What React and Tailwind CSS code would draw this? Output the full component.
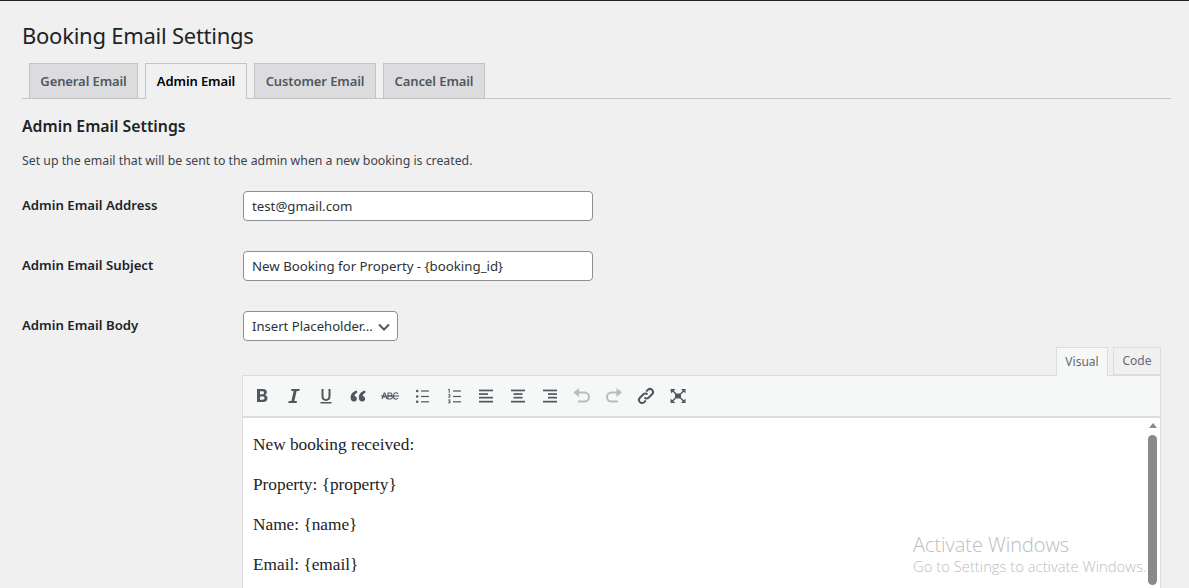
import React from 'react';

const ui = { fontFamily: '"Noto Sans", "Open Sans", sans-serif' };

const tabs = [
  { label: 'General Email', width: 'w-[109px]' },
  { label: 'Admin Email', width: 'w-[102px]', active: true },
  { label: 'Customer Email', width: 'w-[122px]' },
  { label: 'Cancel Email', width: 'w-[102px]' },
];

const Icon = ({ children, muted }) => (
  <svg
    viewBox="0 0 20 20"
    className={`w-5 h-5 ${muted ? 'text-[#b9bcbf]' : 'text-[#50575e]'}`}
    fill="currentColor"
  >
    {children}
  </svg>
);

// toolbar glyphs, drawn on a 20x20 grid
const lines = (rows) => rows.map(([x, y, w, h = 1.2], i) => <rect key={i} x={x} y={y} width={w} height={h} />);

const toolbar = [
  <Icon key="b">
    <path fillRule="evenodd" d="M5 3h6c2.4 0 3.8 1.2 3.8 3.2 0 1.4-.8 2.4-2 2.8 1.6.3 2.7 1.5 2.7 3.3 0 2.3-1.7 3.7-4.3 3.7H5V3zm3 2.3v2.9h2.3c1 0 1.6-.5 1.6-1.5s-.6-1.4-1.600-1.400H8zm0 5.100v3.300h2.600c1.200 0 1.900-.6 1.900-1.700s-.7-1.600-1.900-1.600H8z" />
  </Icon>,
  <Icon key="i">
    <path d="M7.500 3h8.200l-.4 2h-2.700l-2.200 9.900h2.600l-.4 2.100H4.300l.4-2.100h2.700L9.600 5H7.100l.4-2z" />
  </Icon>,
  <Icon key="u">
    <path d="M5.500 3h2v7.200c0 1.800.9 2.900 2.500 2.900s2.500-1.100 2.500-2.900V3h2v7.300c0 2.900-1.700 4.600-4.500 4.600s-4.500-1.700-4.500-4.600V3zM4.500 16h11v1.600h-11z" />
  </Icon>,
  <Icon key="q">
    <path d="M8.800 4.500C5 5.600 2.600 8 2.600 11.600c0 2.400 1.400 4 3.300 4 1.700 0 3-1.200 3-2.900 0-1.600-1.100-2.700-2.500-2.800.3-1.500 1.500-2.700 3.100-3.400L8.800 4.500zM17 4.500c-3.800 1.100-6.200 3.500-6.200 7.100 0 2.400 1.400 4 3.300 4 1.700 0 3-1.200 3-2.900 0-1.600-1.100-2.700-2.500-2.800.3-1.500 1.500-2.700 3.100-3.400L17 4.500z" />
  </Icon>,
  <svg key="s" viewBox="0 0 20 20" className="w-5 h-5 text-[#50575e]" fill="none" stroke="currentColor" strokeWidth="1.100">
    <path d="M2 13l2.200-6h.6l2.200 6M2.800 11h3.400M8 7h2.500c1.800 0 1.800 2.800 0 2.800H8zm0 2.800h2.800c2 0 2 3.200 0 3.200H8zM18 8c-.7-1-1.300-1.200-2-1.200-1.700 0-2.600 1.400-2.600 3.200s.9 3.200 2.600 3.200c.7 0 1.300-.2 2-1.200" />
    <path d="M1 10h18" />
  </svg>,
  <Icon key="ul">
    {lines([[9, 4.400, 8], [9, 9.900, 8], [9, 15.200, 8]])}
    <circle cx="5.200" cy="5" r="1.300" />
    <circle cx="5.200" cy="10.500" r="1.300" />
    <circle cx="5.200" cy="15.800" r="1.300" />
  </Icon>,
  <svg key="ol" viewBox="0 0 20 20" className="w-5 h-5 text-[#50575e]" fill="currentColor">
    {lines([[9, 4.400, 8], [9, 9.900, 8], [9, 15.200, 8]])}
    <g transform="translate(1.500 0.300)">
      <path d="M3.200 2.600h1v4h-1V3.600l-.7.300v-.8zM2.500 8.300c.3-.4.800-.6 1.300-.6.800 0 1.300.4 1.300 1.100 0 .5-.3.900-1.300 1.700h1.400v.8H2.500v-.7c1.300-1 1.600-1.400 1.600-1.700 0-.3-.2-.4-.4-.4-.3 0-.5.200-.7.400zM2.500 13.200h2.600v.6l-1 .9c.7.100 1.100.5 1.100 1.100 0 .8-.6 1.300-1.500 1.300-.5 0-1-.2-1.300-.5l.4-.6c.2.200.5.300.8.300.3 0 .6-.1.600-.4 0-.3-.3-.4-.9-.4v-.6l.8-.8H2.500z" />
    </g>
  </svg>,
  <Icon key="al">{lines([[3, 3.600, 14, 1.700], [3, 7.200, 9, 1.700], [3, 10.800, 14, 1.700], [3, 14.800, 14, 1.700]])}</Icon>,
  <Icon key="ac">{lines([[3, 3.600, 14, 1.700], [5.500, 7.200, 9, 1.700], [5.500, 10.800, 9, 1.700], [3, 14.800, 14, 1.700]])}</Icon>,
  <Icon key="ar">{lines([[3, 3.600, 14, 1.700], [8, 7.200, 9, 1.700], [8, 10.800, 9, 1.700], [3, 14.800, 14, 1.700]])}</Icon>,
  <svg key="undo" viewBox="0 0 20 20" className="w-5 h-5 text-[#b9bcbf]" fill="none" stroke="currentColor" strokeWidth="2">
    <path d="M1.500 6.500L7 2v9z" fill="currentColor" stroke="none" />
    <path d="M5.500 6.500h7a4 4 0 0 1 0 9H6" />
  </svg>,
  <svg key="redo" viewBox="0 0 20 20" className="w-5 h-5 text-[#b9bcbf]" fill="none" stroke="currentColor" strokeWidth="2">
    <path d="M18 6.500L12.500 2v9z" fill="currentColor" stroke="none" />
    <path d="M14 6.500H7.500a4 4 0 0 0 0 9H14" />
  </svg>,
  <svg key="link" viewBox="0 0 20 20" className="w-5 h-5 text-[#50575e]" fill="none" stroke="currentColor" strokeWidth="2">
    <path d="M8.500 11.500a3 3 0 0 0 4.300 0l3.300-3.300a3 3 0 0 0-4.300-4.300L10.200 5.500" />
    <path d="M11.500 8.500a3 3 0 0 0-4.300 0l-3.300 3.300a3 3 0 0 0 4.300 4.300l1.600-1.600" />
  </svg>,
  <Icon key="full">
    <path d="M2.500 3h5L5.800 4.700l2.500 2.500-1.100 1.100-2.500-2.500L3 7.500zM17.500 3v4.500l-1.700-1.700-2.500 2.500-1.100-1.100 2.500-2.500L13 3zM2.500 17v-4.500l1.700 1.700 2.500-2.500 1.100 1.100-2.500 2.500L7.500 17zM17.500 17H13l1.700-1.700-2.500-2.500 1.100-1.100 2.500 2.500 1.700-1.700z" />
    <rect x="7" y="7.500" width="6" height="5" />
  </Icon>,
];

const body = ['New booking received:', 'Property: {property}', 'Name: {name}', 'Email: {email}'];

const Label = ({ children }) => (
  <label className="w-[221px] shrink-0 pt-[4px] text-[13.200px] leading-5 font-semibold text-[#1d2327]">{children}</label>
);

const TextField = ({ value }) => (
  <input
    readOnly
    value={value}
    style={ui}
    className="w-[350px] h-[30px] px-[8px] bg-white border border-[#8c8f94] rounded-[4px] text-[13.250px] text-[#2c3338] outline-none"
  />
);

export default function App() {
  return (
    <div style={ui} className="relative h-[588px] overflow-hidden bg-[#f0f0f1] border-t border-[#1d2327] text-[#3c434a]">
      <div className="pl-[22px] pr-[18px]">
        <h1 className="pt-[18px] h-[62px] text-[22px] tracking-[-0.25px] leading-[32px] font-normal text-[#1d2327]">Booking Email Settings</h1>

        {/* Tab Navigation */}
        <div className="flex gap-[7px] pl-[7px] h-[36px] border-b border-[#c3c4c7]">
          {tabs.map((tab) => (
            <div
              key={tab.label}
              className={`${tab.width} h-[36px] pt-[1px] flex items-center justify-center border border-[#c3c4c7] text-[13px] tracking-[-0.1px] font-semibold ${
                tab.active ? 'bg-[#f0f0f1] border-b-[#f0f0f1] text-black' : 'bg-[#dcdcde] text-[#50575e]'
              }`}
            >
              {tab.label}
            </div>
          ))}
        </div>

        <h2 className="mt-[16px] text-[15.800px] leading-[22px] font-semibold text-[#1d2327]">Admin Email Settings</h2>
        <p className="mt-[15px] text-[12.300px] leading-[18px] text-[#3c434a]">
          Set up the email that will be sent to the admin when a new booking is created.
        </p>

        {/* Settings rows */}
        <div className="mt-[21px] flex flex-col gap-[30px]">
          <div className="flex">
            <Label>Admin Email Address</Label>
            <TextField value="test@gmail.com" />
          </div>
          <div className="flex">
            <Label>Admin Email Subject</Label>
            <TextField value="New Booking for Property - {booking_id}" />
          </div>
          <div className="flex">
            <Label>Admin Email Body</Label>
            <div className="flex items-center justify-between w-[155px] h-[30px] pt-[1px] pl-[8px] pr-[7px] bg-white border border-[#8c8f94] rounded-[4px] text-[13.100px] text-[#2c3338]">
              <span>Insert Placeholder...</span>
              <svg viewBox="0 0 12 8" className="w-3 h-2" fill="none" stroke="#50575e" strokeWidth="2">
                <path d="M1 1.500l5 5 5-5" />
              </svg>
            </div>
          </div>
        </div>

        {/* Editor */}
        <div className="ml-[220px] mr-[10px] mt-[6px]">
          <div className="flex justify-end gap-[5px] h-[28px] text-[12px] text-[#646970]">
            <div className="relative z-10 w-[52px] h-[29px] flex items-center justify-center bg-[#f6f7f7] border border-[#dcdcde] border-b-[#f6f7f7]">Visual</div>
            <div className="w-[48px] h-[28px] flex items-center justify-center bg-[#f0f0f1] border border-[#dcdcde]">Code</div>
          </div>
          <div className="border border-[#dcdcde] bg-white">
            <div className="flex items-center h-[42px] pl-[9px] gap-[12px] bg-[#f6f7f7] border-b-2 border-[#dcdcde]">
              {toolbar}
            </div>
            <div className="flex h-[300px]">
              <div
                style={{ fontFamily: '"Liberation Serif", serif' }}
                className="flex-1 pl-[10px] pt-[17px] text-[17.300px] leading-[20px] text-[#1d2327] flex flex-col gap-[20px]"
              >
                {body.map((line) => (
                  <p key={line}>{line}</p>
                ))}
              </div>
              <div className="w-[9px] mr-[3px] pt-[5px] flex flex-col items-center">
                <div className="w-0 h-0 border-x-[4px] border-x-transparent border-b-[5px] border-b-[#8a8a8a]" />
                <div className="mt-[7px] w-[9px] h-[150px] rounded-full bg-[#8a8a8a]" />
              </div>
            </div>
          </div>
        </div>
      </div>

      {/* Windows watermark */}
      <div
        style={{ fontFamily: '"Open Sans", sans-serif' }}
        className="absolute left-[913px] top-[531px] text-[#bdbdbd] font-light whitespace-nowrap"
      >
        <div className="text-[19.900px] leading-[26px]">Activate Windows</div>
        <div className="text-[14.800px] leading-[17px]">Go to Settings to activate Windows.</div>
      </div>
    </div>
  );
}
